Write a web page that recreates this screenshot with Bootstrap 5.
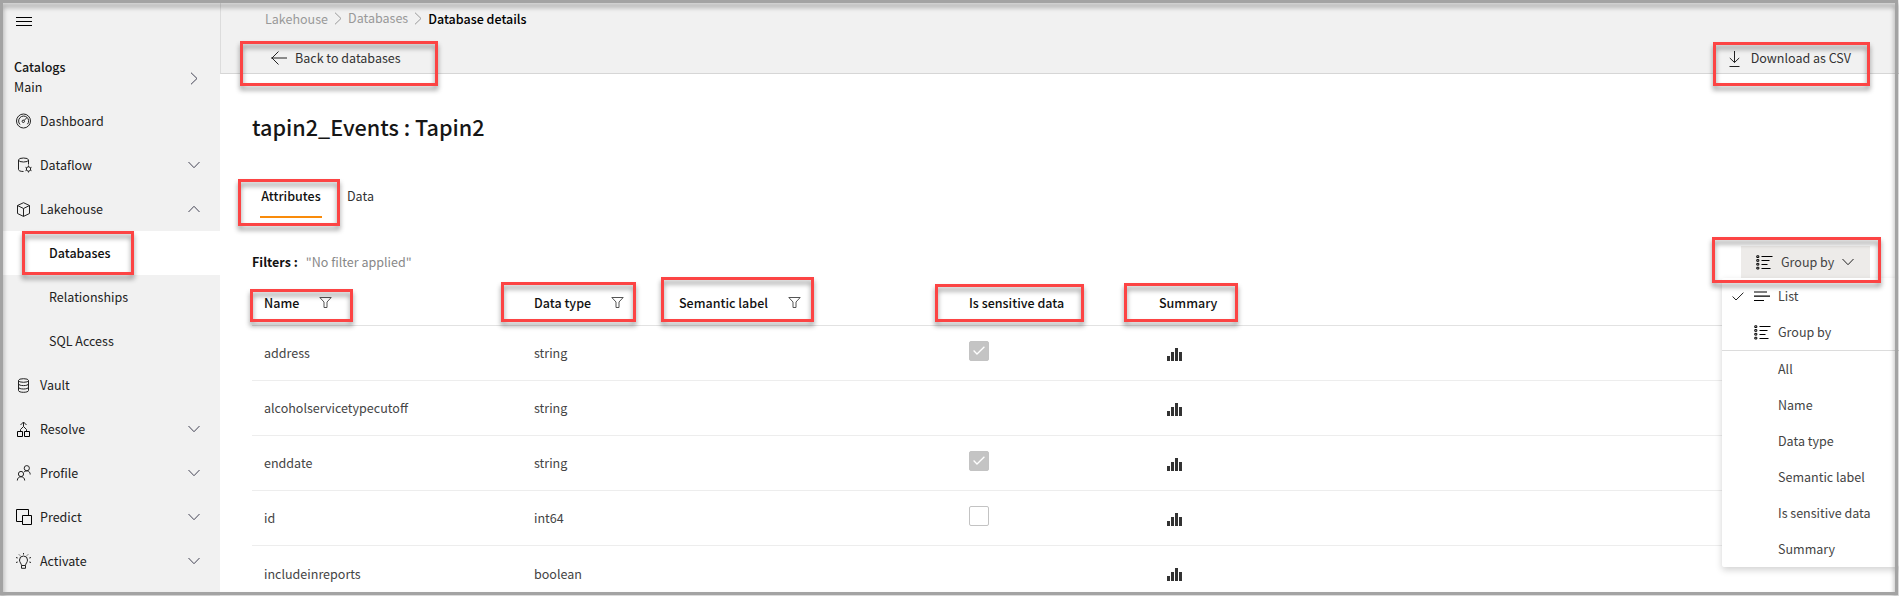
<!DOCTYPE html>
<html lang="en">
<head>
<meta charset="utf-8">
<title>Database details</title>
<link rel="stylesheet" href="https://cdn.jsdelivr.net/npm/bootstrap@5.3.0/dist/css/bootstrap.min.css">
<style>
html,body{height:100%;overflow:hidden}
body{font-family:"Noto Sans CJK SC","Noto Sans",sans-serif;font-size:12.53px;line-height:20px;color:#161616;background:#fff}
svg{display:block;fill:none;stroke:#222;stroke-width:1;flex:none}
.semi{font-weight:500}
.shell{height:596px;position:relative}
.side{width:220px;background:#f1f1f1;flex:none}
.side-top{height:35px;padding:17px 0 0 16px}
.side-top svg{stroke:#000}
.catalogs{height:64px;padding:22px 22px 0 14px}
.catalogs svg{margin-top:15px;stroke:#445}
.item{height:44px;padding:0 20px 0 16px;color:#222}
.item .ico{width:24px}
.item .chev{margin-left:auto;stroke:#445}
.item.sub{padding-left:49px}
.item.on{background:#fff;color:#111;font-weight:500}
.topbar{height:74px;background:#f1f1f1;border-left:1px solid #dcdcdc;border-bottom:1px solid #d6d6d6}
.crumbs{padding:9px 0 0 44px;color:#999;height:48px}
.crumbs svg{stroke:#999;margin:3px 6px 0 6px}
.crumbs .mid{margin-top:-1px}
.actions{padding:0 48px 0 50px;height:20px;color:#333}
.actions .dl{margin-right:11px}
.body{padding-left:32px}
.title{font-size:21.6px;font-weight:500;line-height:30px;margin:38px 0 0}
.tabrow{margin-top:43px;padding-left:8px}
.tabrow .tab{height:33px;padding-top:1px;margin-right:25px;color:#333}
.tabrow .tab.on{border-bottom:2px solid #f98b0a;padding-left:0;width:62px;text-align:center;font-weight:500;color:#111}
.toolbar{height:32px;margin-top:28px;padding-right:29px}
.groupbtn{width:129px;height:32px;background:#edebe9;padding-left:15px;color:#444}
.grid-row{display:grid;grid-template-columns:270px 145px 290px 190px 1fr;height:55px;padding-left:12px;border-bottom:1px solid #ededed;align-items:center;color:#444}
.grid-row.head{height:48px;color:#111;font-weight:500;border-color:#e2e2e2;padding-top:2px}
.grid-row svg.f{stroke:#555;margin:0 0 0 20px}
.check{width:20px;height:20px;border:1px solid #c3c3c3;border-radius:2px;margin-bottom:5px}
.check.on{background:#c4c4c4}
.check svg{stroke:#fff;stroke-width:1.3}
.bars{fill:#333;stroke:none;margin:2px 0 0 8px}
.menu{position:absolute;left:1722px;top:278px;width:177px;height:289px;background:#fff;box-shadow:0 3px 7px rgba(0,0,0,.18);border-radius:2px;color:#444}
.menu .mi{height:36px;padding-left:56px}
.menu .mi.ic{padding-left:10px}
.menu .slot{width:22px}
.menu .slot2{width:24px}
.menu hr{margin:0;border:0;border-top:1px solid #dcdcdc;opacity:1}
.mark-box{position:absolute;border:3px solid #fc4444;filter:drop-shadow(0 4px 2.5px rgba(0,0,0,.42));pointer-events:none}
.b1{left:240px;top:41px;width:198px;height:45px}
.b2{left:1713px;top:42px;width:157px;height:44px}
.b3{left:238px;top:179px;width:102px;height:47px}
.b4{left:22px;top:231px;width:112px;height:44px}
.b5{left:250px;top:289px;width:103px;height:33px}
.b6{left:501px;top:282px;width:135px;height:40px}
.b7{left:661px;top:277px;width:153px;height:45px}
.b8{left:935px;top:284px;width:149px;height:38px}
.b9{left:1124px;top:283px;width:114px;height:39px}
.b10{left:1712px;top:237px;width:169px;height:46px}
.edge{position:absolute;left:0;top:0;width:1898px;height:595px;border:3px solid #a3a3a3;filter:drop-shadow(0 4px 2.5px rgba(0,0,0,.4));pointer-events:none}
</style>
</head>
<body>
<svg class="d-none" width="0" height="0">
  <symbol id="down" viewBox="0 0 12 8"><path d="M.5 1 6 6.700 11.500 1"/></symbol>
  <symbol id="right" viewBox="0 0 8 13"><path d="M1 .7 7 6.500 1 12.300"/></symbol>
  <symbol id="funnel" viewBox="0 0 13 11"><path d="M.8.5H12.200L8 5V10.500H5V5Z"/></symbol>
  <symbol id="group" viewBox="0 0 17 15"><path d="M5.500 1.500H16.500M5.500 5.500H13.500M5.500 9.500H11.500M5.500 13.500H14.500" stroke="#000" stroke-width="1.200"/><path stroke="#000" d="M.8.8h2v1.700h-2zM.8 4.600h2v1.700h-2zM.8 8.400h2v1.700h-2zM.8 12.300h2v1.700h-2z"/></symbol>
  <symbol id="bars" viewBox="0 0 16 13"><path d="M0 8h3v5H0zM4 4h3v9H4zM8 0h3v13H8zM12 4h3v9h-3z"/></symbol>
  <symbol id="tick" viewBox="0 0 12 9"><path d="M.6 4.500 4 8 11.400.7"/></symbol>
</svg>
<div class="shell d-flex">
  <nav class="side">
    <div class="side-top"><svg width="16" height="9"><path d="M0 .5H16M0 4.500H16M0 8.500H16"/></svg></div>
    <div class="catalogs d-flex justify-content-between"><div><div class="semi">Catalogs</div><div>Main</div></div><svg width="8" height="13"><use href="#right"/></svg></div>
    <div class="item d-flex align-items-center"><span class="ico"><svg width="15" height="16" viewBox="0 0 15 16"><circle cx="7.500" cy="8" r="7"/><path d="M4 11.500A5 5 0 1 1 11.500 11.200M8 7.500 11 4.500"/><circle cx="7.300" cy="8.300" r="1.200"/></svg></span>Dashboard</div>
    <div class="item d-flex align-items-center"><span class="ico"><svg width="17" height="16" viewBox="0 0 17 16"><path d="M2.500 3v9.500c0 1 1.500 2 5 2M12.500 3v4.500"/><ellipse cx="7.500" cy="3" rx="5" ry="2"/><circle cx="12.500" cy="12" r="2.200"/><path d="M12.500 8.500v1.300M12.500 14.200v1.300M9.500 10.300l1.100.6M14.400 13.100l1.100.6M9.500 13.700l1.100-.6M14.400 10.900l1.100-.6"/></svg></span>Dataflow<svg class="chev" width="12" height="8"><use href="#down"/></svg></div>
    <div class="item d-flex align-items-center"><span class="ico"><svg width="15" height="15" viewBox="0 0 15 15"><path d="M7.500.7 13.500 3.500V11.500L7.500 14.400 1.500 11.500V3.500ZM1.500 3.500 7.500 6.500 13.500 3.500M7.500 6.500V14.400"/></svg></span>Lakehouse<svg class="chev" width="12" height="8" viewBox="0 0 12 8"><path d="M.5 7 6 1.300 11.500 7"/></svg></div>
    <div class="item sub on d-flex align-items-center">Databases</div>
    <div class="item sub d-flex align-items-center">Relationships</div>
    <div class="item sub d-flex align-items-center">SQL Access</div>
    <div class="item d-flex align-items-center"><span class="ico"><svg width="15" height="15" viewBox="0 0 15 15"><ellipse cx="7.500" cy="2.500" rx="5" ry="1.800"/><path d="M2.500 2.500v10c0 2.400 10 2.400 10 0v-10M2.500 5.800c0 2.400 10 2.400 10 0M2.500 9.200c0 2.400 10 2.400 10 0"/></svg></span>Vault</div>
    <div class="item d-flex align-items-center"><span class="ico"><svg width="15" height="16" viewBox="0 0 15 16"><path stroke="#000" d="M1.500 10.500h5v5h-5zM8.500 10.500h5v5h-5z"/><path d="M4.500 10V8.500L7.500 5.500V1M10.500 10V8.500L7.500 5.500M4.500 4 7.500 1 10.500 4"/></svg></span>Resolve<svg class="chev" width="12" height="8"><use href="#down"/></svg></div>
    <div class="item d-flex align-items-center"><span class="ico"><svg width="16" height="16" viewBox="0 0 16 16"><circle cx="10.800" cy="3.200" r="2.600"/><circle cx="5" cy="9" r="2.600"/><path d="M1.300 15.500c0-5 7.400-5 7.400 0M8 7c2-2 6.200-1.500 6.200 2.500"/></svg></span>Profile<svg class="chev" width="12" height="8"><use href="#down"/></svg></div>
    <div class="item d-flex align-items-center"><span class="ico"><svg width="16" height="16" viewBox="0 0 16 16"><path stroke="#000" d="M6 12.500H.5V.5h12V6M6.500 6.500h9v9h-9z"/></svg></span>Predict<svg class="chev" width="12" height="8"><use href="#down"/></svg></div>
    <div class="item d-flex align-items-center"><span class="ico"><svg width="15" height="16" viewBox="0 0 15 16"><path d="M5.500 12.500C5.500 10.500 3.500 9.500 3.500 7a4 4 0 0 1 8 0c0 2.500-2 3.500-2 5.500ZM5.500 12.500v2.800h4v-2.800M7.500 0v1.500M3 1.500l1 1M12 1.500l-1 1M0 4.500l1.700.5M15 4.500l-1.700.5M0 9.500l1.700-.5M15 9.500l-1.700-.5"/></svg></span>Activate<svg class="chev" width="12" height="8"><use href="#down"/></svg></div>
  </nav>
  <main class="flex-grow-1">
    <div class="topbar">
      <div class="crumbs d-flex"><span>Lakehouse</span><svg width="8" height="13"><use href="#right"/></svg><span class="mid">Databases</span><svg width="8" height="13"><use href="#right"/></svg><span class="text-black semi">Database details</span></div>
      <div class="actions d-flex justify-content-between">
        <div class="d-flex align-items-center"><svg class="me-2" width="16" height="14" viewBox="0 0 16 14"><path d="M0 7H16M7.500.5 1 7l6.500 6.500"/></svg>Back to databases</div>
        <div class="d-flex align-items-center"><svg class="dl" width="11" height="17" viewBox="0 0 11 17"><path d="M5.500 1V12.500M.8 8 5.500 12.500 10.200 8M.5 16.500H10.500"/></svg>Download as CSV</div>
      </div>
    </div>
    <div class="body">
      <h1 class="title">tapin2_Events : Tapin2</h1>
      <div class="tabrow d-flex"><div class="tab on">Attributes</div><div class="tab">Data</div></div>
      <div class="toolbar d-flex justify-content-between align-items-center"><div><b class="me-2" style="color:#111">Filters :</b><span style="color:#888">"No filter applied"</span></div>
        <div class="groupbtn d-flex align-items-center"><svg class="me-2" width="17" height="15"><use href="#group"/></svg>Group by<svg class="ms-2" width="12" height="8"><use href="#down"/></svg></div></div>
      <div class="grid-row head"><div class="d-flex align-items-center">Name<svg class="f" width="13" height="11"><use href="#funnel"/></svg></div><div class="d-flex align-items-center">Data type<svg class="f" width="13" height="11"><use href="#funnel"/></svg></div><div class="d-flex align-items-center">Semantic label<svg class="f" width="13" height="11"><use href="#funnel"/></svg></div><div>Is sensitive data</div><div>Summary</div></div>
      <div class="grid-row"><span>address</span><span>string</span><span></span><div class="check on d-flex align-items-center justify-content-center"><svg width="12" height="9"><use href="#tick"/></svg></div><svg class="bars" width="16" height="13"><use href="#bars"/></svg></div>
      <div class="grid-row"><span>alcoholservicetypecutoff</span><span>string</span><span></span><span></span><svg class="bars" width="16" height="13"><use href="#bars"/></svg></div>
      <div class="grid-row"><span>enddate</span><span>string</span><span></span><div class="check on d-flex align-items-center justify-content-center"><svg width="12" height="9"><use href="#tick"/></svg></div><svg class="bars" width="16" height="13"><use href="#bars"/></svg></div>
      <div class="grid-row"><span>id</span><span>int64</span><span></span><div class="check"></div><svg class="bars" width="16" height="13"><use href="#bars"/></svg></div>
      <div class="grid-row border-0"><span>includeinreports</span><span>boolean</span><span></span><span></span><svg class="bars" width="16" height="13"><use href="#bars"/></svg></div>
    </div>
  </main>
  <div class="menu">
    <div class="mi ic d-flex align-items-center"><span class="slot"><svg width="12" height="9"><use href="#tick"/></svg></span><span class="slot2"><svg width="16" height="11" viewBox="0 0 16 11"><path d="M0 1H13M0 5.200H16M0 9.500H10" stroke="#000" stroke-width="1.200"/></svg></span>List</div>
    <div class="mi ic d-flex align-items-center"><span class="slot"></span><span class="slot2"><svg width="17" height="15"><use href="#group"/></svg></span>Group by</div>
    <hr>
    <div class="mi d-flex align-items-center">All</div><div class="mi d-flex align-items-center">Name</div><div class="mi d-flex align-items-center">Data type</div><div class="mi d-flex align-items-center">Semantic label</div><div class="mi d-flex align-items-center">Is sensitive data</div><div class="mi d-flex align-items-center">Summary</div>
  </div>
  <div class="mark-box b1"></div><div class="mark-box b2"></div><div class="mark-box b3"></div><div class="mark-box b4"></div><div class="mark-box b5"></div><div class="mark-box b6"></div><div class="mark-box b7"></div><div class="mark-box b8"></div><div class="mark-box b9"></div><div class="mark-box b10"></div>
  <div class="edge"></div>
</div>
<script src="https://cdn.jsdelivr.net/npm/bootstrap@5.3.0/dist/js/bootstrap.bundle.min.js"></script>
</body>
</html>
